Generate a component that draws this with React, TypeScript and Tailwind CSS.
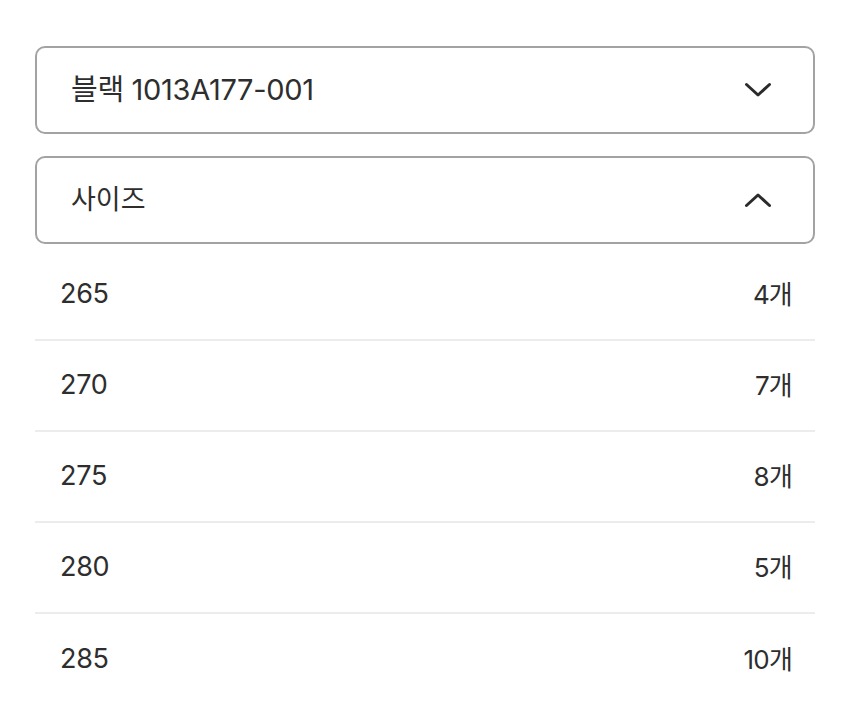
const sizes = [
  { size: "265", count: "4개" },
  { size: "270", count: "7개" },
  { size: "275", count: "8개" },
  { size: "280", count: "5개" },
  { size: "285", count: "10개" },
];

const font = { fontFamily: '"Inter", "Noto Sans CJK KR", sans-serif' };

function Chevron({ up }: { up?: boolean }) {
  return (
    <svg width="28" height="16" viewBox="0 0 28 16" fill="none" className="text-[#2b2b2b]">
      <path
        d={up ? "M2.5 13.5 14 3 25.5 13.5" : "M2.5 2.5 14 13 25.5 2.5"}
        stroke="currentColor"
        strokeWidth="3"
        strokeLinecap="round"
        strokeLinejoin="round"
      />
    </svg>
  );
}

export default function App() {
  return (
    <div className="min-h-[708px] bg-white px-[35px] pt-[46px] text-[#2e2e2e]" style={font}>
      {/* color select */}
      <button className="flex h-[88px] w-full items-center justify-between rounded-[10px] border-2 border-[#a3a3a3] pl-[34px] pr-[41px]">
        <span className="text-[29px] tracking-[-0.3px]">블랙 1013A177-001</span>
        <Chevron />
      </button>

      {/* size select */}
      <button className="mt-[22px] flex h-[88px] w-full items-center justify-between rounded-[10px] border-2 border-[#a3a3a3] pl-[34px] pr-[41px]">
        <span className="text-[27px]">사이즈</span>
        <Chevron up />
      </button>

      <ul className="mt-[6px]">
        {sizes.map((s, i) => (
          <li
            key={s.size}
            className={`flex h-[91px] items-center justify-between pl-[25px] pr-[23px] ${
              i < sizes.length - 1 ? "border-b-2 border-[#ececec]" : ""
            }`}
          >
            <span className="text-[27px] tracking-[-0.3px]">{s.size}</span>
            <span className="text-[26px] tracking-[-0.8px]">{s.count}</span>
          </li>
        ))}
      </ul>
    </div>
  );
}
